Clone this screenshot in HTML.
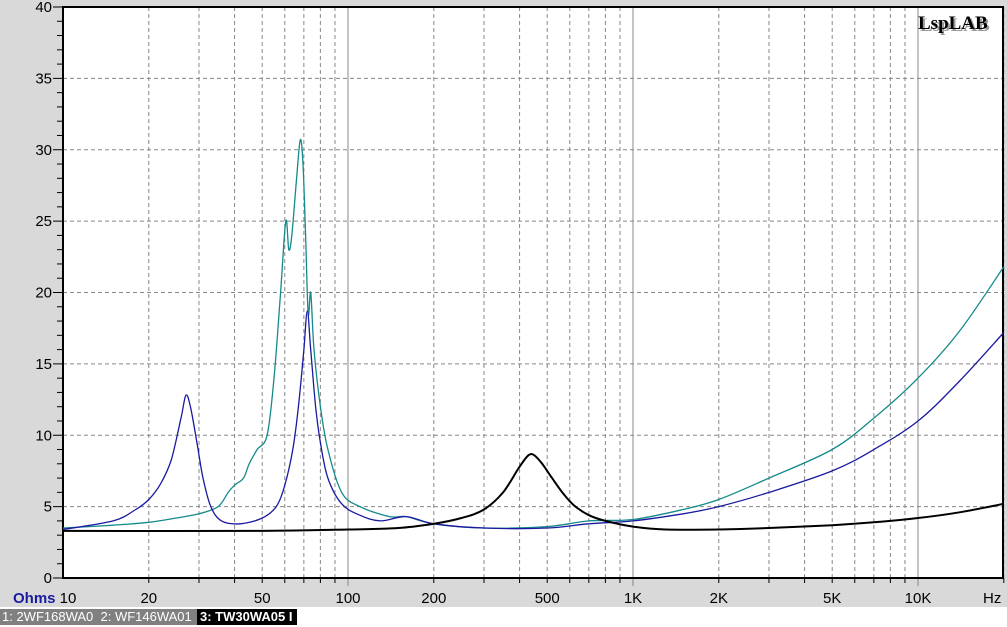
<!DOCTYPE html>
<html><head><meta charset="utf-8"><style>
body{margin:0;width:1007px;height:627px;overflow:hidden;background:#fff;font-family:"Liberation Sans",sans-serif}
#top{position:absolute;left:0;top:0;width:1007px;height:607px;background:#d9d9d9}
svg{position:absolute;left:0;top:0}
#tabs{position:absolute;left:0;top:609px;height:16px;font-size:13px;line-height:16px;white-space:nowrap}
.t1{position:absolute;left:0;width:195px;background:#808080;color:#fff;padding-left:2px;height:16px}
.t2{position:absolute;left:197px;width:97px;background:#000;color:#fff;font-weight:bold;padding-left:3px;height:16px}
</style></head><body>
<div id="top"></div>
<svg id="s" width="1007" height="627" xmlns="http://www.w3.org/2000/svg"></svg>
<div id="tabs"><div class="t1">1: 2WF168WA0&nbsp; 2: WF146WA01</div><div class="t2">3: TW30WA05 I</div></div>
<script>
const s=document.getElementById('s');
const X=f=>63+285*Math.log10(f/10), Y=z=>578-14.275*z;
let h='<rect x="63" y="7" width="940" height="571" fill="#fff"/>';
for(let d=10;d<=10000;d*=10)for(let k=1;k<10;k++){const f=d*k;if(f>20000)break;const x=X(f);
 if(k==1&&d>10)h+=`<line x1="${x}" y1="7" x2="${x}" y2="586" stroke="#888" stroke-width="1"/>`;
 else if(k>1)h+=`<line x1="${x}" y1="7" x2="${x}" y2="578" stroke="#888" stroke-dasharray="4,3"/><line x1="${x}" y1="578" x2="${x}" y2="583" stroke="#000"/>`;}
for(let z=5;z<40;z+=5)h+=`<line x1="63" y1="${Y(z)}" x2="1003" y2="${Y(z)}" stroke="#888" stroke-dasharray="4,3"/>`;
for(let z=0;z<=40;z++){const y=Y(z);h+=`<line x1="${z%5?57:53}" y1="${y}" x2="63" y2="${y}" stroke="#000"/>`;
 if(z%5==0)h+=`<text x="52" y="${y+5}" text-anchor="end" font-size="15" font-family="Liberation Sans">${z}</text>`;}
const lab=[[10,'10'],[20,'20'],[50,'50'],[100,'100'],[200,'200'],[500,'500'],[1000,'1K'],[2000,'2K'],[5000,'5K'],[10000,'10K']];
lab.forEach(([f,t])=>h+=`<text x="${X(f)+(f==10?5:0)}" y="603" text-anchor="middle" font-size="15" font-family="Liberation Sans">${t}</text>`);
h+=`<text x="983" y="603" font-size="15" font-family="Liberation Sans">Hz</text><text x="13" y="603" font-size="15" font-weight="bold" fill="#1a1aa0" font-family="Liberation Sans">Ohms</text>`;
h+='<rect x="63" y="7" width="940" height="571" fill="none" stroke="#000" stroke-width="2"/>';
h+='<text x="920" y="31" font-size="19" font-weight="bold" font-family="Liberation Serif" fill="#999">LspLAB</text><text x="918" y="29" font-size="19" font-weight="bold" font-family="Liberation Serif">LspLAB</text>';
function c(d,col,w){const p=d.map(q=>[X(q[0]),Y(q[1])]);let s='M'+p[0][0].toFixed(1)+','+p[0][1].toFixed(1);
 for(let i=0;i<p.length-1;i++){const a=p[i-1]||p[i],b=p[i],e=p[i+1],g=p[i+2]||e;
 const c1=[b[0]+(e[0]-a[0])/6,b[1]+(e[1]-a[1])/6],c2=[e[0]-(g[0]-b[0])/6,e[1]-(g[1]-b[1])/6];
 s+=` C${c1[0].toFixed(1)},${c1[1].toFixed(1)} ${c2[0].toFixed(1)},${c2[1].toFixed(1)} ${e[0].toFixed(1)},${e[1].toFixed(1)}`;}
 return `<path fill="none" stroke="${col}" stroke-width="${w}" stroke-linejoin="round" d="${s}"/>`;}
const teal=[[10,3.5],[15,3.7],[20,3.9],[25,4.2],[30,4.5],[35,5],[38,6],[40,6.5],[43,7],[45,8],[48,9],[52,10],[55,14],[58,20],[60.5,25],[62,23],[63.5,24],[66,28],[68,30.7],[69.5,29],[71,24],[72.5,18.5],[74,20],[76,16],[80,12],[85,9],[95,6],[110,5],[140,4.3],[160,4.3],[200,3.8],[300,3.5],[500,3.6],[700,4],[1000,4.1],[1500,4.8],[2000,5.5],[3000,7],[5000,9],[7000,11.2],[10000,14],[14000,17.3],[20000,21.8]];
const blue=[[10,3.4],[15,4],[18,4.8],[20,5.5],[22,6.6],[24,8.3],[26,11.3],[27,12.8],[28,12],[29.5,9.5],[31,7],[33,5],[36,4],[42,3.8],[50,4.2],[56,5],[60,6.5],[64,9],[67,12],[70,16],[72,18.7],[74,16],[77,12],[80,9.5],[85,7],[95,5.2],[110,4.4],[130,4],[160,4.3],[200,3.8],[300,3.5],[500,3.5],[700,3.8],[1000,4],[1500,4.5],[2000,5],[3000,6],[5000,7.5],[7000,9],[10000,11],[14000,13.8],[20000,17.2]];
const blk=[[10,3.3],[50,3.3],[100,3.4],[150,3.5],[200,3.8],[250,4.2],[300,4.8],[350,6],[400,7.8],[430,8.6],[450,8.6],[480,8],[520,7],[570,5.9],[620,5.1],[700,4.4],[800,4],[1000,3.6],[1300,3.4],[2000,3.4],[3000,3.5],[5000,3.7],[7000,3.9],[10000,4.2],[14000,4.6],[20000,5.2]];
h+=c(teal,'#148a8a',1.3)+c(blue,'#1a1aa0',1.3)+c(blk,'#000',2);
s.innerHTML=h;
</script>
</body></html>
